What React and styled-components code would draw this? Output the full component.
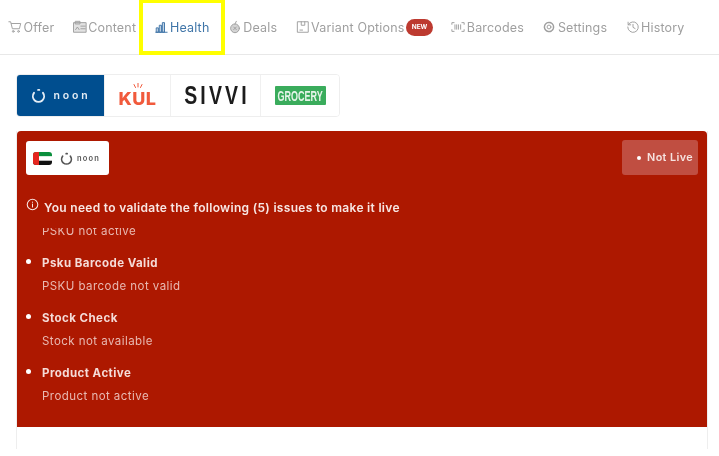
import React from 'react'
import styled, { createGlobalStyle } from 'styled-components'

const Global = createGlobalStyle`
  * { box-sizing: border-box; }
  html, body { margin: 0; padding: 0; background: #fff; }
  body { font-family: "Inter", "Noto Sans", sans-serif; }
`

const Page = styled.div`
  width: 719px;
  height: 456px;
  overflow: hidden;
  background: #fff;
  filter: blur(0.35px);
`

const Nav = styled.nav`
  display: flex;
  align-items: center;
  height: 55px;
  padding-left: 8px;
  gap: 18.3px;
  border-bottom: 1px solid #e8e8e8;
`

const Tab = styled.div`
  position: relative;
  display: flex;
  align-items: center;
  gap: 1.5px;
  height: 100%;
  font-size: 12.5px;
  letter-spacing: 0.18px;
  color: ${p => (p.$active ? '#3f75a8' : '#9f9f9f')};

  &::after {
    content: '';
    display: ${p => (p.$active ? 'block' : 'none')};
    position: absolute;
    left: -15px;
    right: -16px;
    top: 0;
    bottom: -1px;
    border: 4px solid #ffff00;
    border-top-width: 3px;
  }
`

const Badge = styled.span`
  display: flex;
  align-items: center;
  justify-content: center;
  width: 27px;
  height: 17px;
  border-radius: 9px;
  background: #bd3a30;
  color: #fff;
  font-size: 6.5px;
  font-weight: 700;
  letter-spacing: 0;
`

const Main = styled.main`
  padding: 19px 11px 0 16px;
`

const Stores = styled.div`
  display: inline-flex;
  height: 43px;
  border: 1px solid #eeeeee;
  border-radius: 4px;
  overflow: hidden;
`

const Store = styled.div`
  display: flex;
  align-items: center;
  justify-content: center;
  width: ${p => p.$w}px;
  background: ${p => (p.$active ? '#004e8f' : '#fff')};
  border-left: ${p => (p.$active ? 'none' : '1px solid #f0f0f0')};
`

const NoonMark = styled.div`
  display: flex;
  align-items: center;
  gap: ${p => (p.$small ? 4 : 8)}px;
  color: ${p => (p.$small ? '#555' : '#e4edf5')};
  font-size: ${p => (p.$small ? 7.5 : 10.5)}px;
  font-weight: 600;
  letter-spacing: ${p => (p.$small ? 1.2 : 2.8)}px;
`

const Kul = styled.span`
  position: relative;
  color: #f15a3c;
  font-size: 18px;
  font-weight: 800;
  letter-spacing: 0.5px;
  line-height: 1;
  margin-top: 7px;
`

const KulRays = styled.svg`
  position: absolute;
  left: 13px;
  top: -7px;
`

const Sivvi = styled.span`
  display: block;
  color: #1c1c1c;
  font-family: "Liberation Sans", sans-serif;
  font-size: 25px;
  font-weight: 700;
  letter-spacing: 4px;
  margin-right: -2px;
  transform: scaleX(0.78);
`

const Grocery = styled.span`
  display: flex;
  align-items: center;
  justify-content: center;
  width: 51px;
  height: 19px;
  background: #3aac5c;
  border-radius: 1px;
`

const GroceryText = styled.span`
  display: block;
  color: #e4f4e8;
  font-family: "Liberation Sans", sans-serif;
  font-size: 12px;
  font-weight: 700;
  transform: scale(0.75, 1.25);
`

const Card = styled.section`
  margin-top: 14px;
  height: 318px;
  border: 1px solid #eeeeee;
  border-top: none;
  border-bottom: none;
`

const Alert = styled.div`
  height: 296px;
  padding: 10px 9px 0 9px;
  background: #ad1800;
  border-radius: 4px 4px 0 0;
  display: flex;
  flex-direction: column;
  overflow: hidden;
`

const AlertTop = styled.div`
  display: flex;
  justify-content: space-between;
  align-items: flex-start;
`

const MarketChip = styled.div`
  display: flex;
  align-items: center;
  gap: 8px;
  width: 83px;
  height: 34px;
  padding-left: 7px;
  background: #fff;
  border-radius: 3px;
`

const Flag = styled.span`
  display: flex;
  border-radius: 3px;
  overflow: hidden;
  line-height: 0;
`

const Status = styled.div`
  display: flex;
  align-items: center;
  justify-content: flex-end;
  gap: 6px;
  width: 76px;
  height: 35px;
  margin-top: -1px;
  padding-right: 5px;
  background: #c04e41;
  border-radius: 3px;
  color: #f6e3e0;
  font-size: 10.8px;
  font-weight: 600;
  letter-spacing: 0.4px;
`

const Dot = styled.span`
  width: 4px;
  height: 4px;
  border-radius: 50%;
  background: #fff;
`

const Heading = styled.div`
  display: flex;
  align-items: center;
  gap: 5px;
  margin-top: 24px;
  height: 16px;
  color: #f7e6e3;
  font-size: 12px;
  font-weight: 600;
  letter-spacing: 0.3px;
`

const HeadingIcon = styled.svg`
  margin-top: -6px;
`

const Scroll = styled.div`
  flex: 1;
  margin-top: 13px;
  overflow: hidden;
`

const Issues = styled.ul`
  list-style: none;
  margin: -24px 0 0;
  padding: 0;
`

const Issue = styled.li`
  position: relative;
  height: ${p => (p.$scrolled ? 39 : 55)}px;
  padding: 12px 0 0 16px;

  &::before {
    content: '';
    display: ${p => (p.$scrolled ? 'none' : 'block')};
    position: absolute;
    left: 0;
    top: 16px;
    width: 5px;
    height: 5px;
    border-radius: 50%;
    background: #fff;
  }
`

const IssueTitle = styled.div`
  color: #f5dcd8;
  font-size: 11.5px;
  font-weight: 700;
  letter-spacing: 0.45px;
  line-height: 16px;
`

const IssueText = styled.div`
  margin-top: 7px;
  color: #e8b9b1;
  font-size: 11.5px;
  letter-spacing: 0.45px;
  line-height: 16px;
`

const IconSvg = ({ children, size = 14 }) => (
  <svg width={size} height={size} viewBox="0 0 16 16" fill="none" stroke="currentColor" strokeWidth="1.1" strokeLinecap="round" strokeLinejoin="round">
    {children}
  </svg>
)

const icons = {
  offer: <><path d="M1 2h2l2 8h8l1.5-6H4" /><circle cx="6" cy="13" r="1" /><circle cx="12" cy="13" r="1" /></>,
  content: <><rect x="1" y="3" width="14" height="11" fill="currentColor" fillOpacity=".3" /><rect x="3" y="1.5" width="5" height="3" /><path d="M9 7h5M9 10h5M3 11l2-3 2 3" /></>,
  health: <><path d="M2 14h13" /><rect x="3" y="9" width="2" height="5" fill="currentColor" fillOpacity=".3" /><rect x="6.5" y="6" width="2" height="8" fill="currentColor" fillOpacity=".3" /><rect x="10" y="3" width="2" height="11" fill="currentColor" fillOpacity=".3" /></>,
  deals: <><circle cx="8" cy="9.5" r="5" fill="currentColor" fillOpacity=".45" /><path d="M8 4.5L9.5 1.5M6.5 8l3 3M6.5 11l3-3" /></>,
  variant: <><rect x="2" y="2" width="12" height="12" /><path d="M6 2v4h4V2M4.5 11.5h3" /></>,
  barcode: <><path d="M1 5V3h2.5M15 5V3h-2.5M1 11v2h2.5M15 11v2h-2.5M4.5 5.5v5M6.5 5.5v5M8.5 5.5v5M11 5.5v5" /></>,
  settings: <><circle cx="8" cy="8" r="2.2" /><circle cx="8" cy="8" r="5.2" strokeDasharray="1.6 .9" strokeWidth="1.7" /></>,
  history: <><path d="M2.6 5.5A6 6 0 1 1 2 8M2.4 2.5v3h3M8 5v3.4l2.4 1.4" /></>,
}

const tabs = [
  { label: 'Offer', icon: 'offer' },
  { label: 'Content', icon: 'content' },
  { label: 'Health', icon: 'health', active: true },
  { label: 'Deals', icon: 'deals' },
  { label: 'Variant Options', icon: 'variant', badge: 'NEW' },
  { label: 'Barcodes', icon: 'barcode' },
  { label: 'Settings', icon: 'settings' },
  { label: 'History', icon: 'history' },
]

// first one is scrolled half out of the list, its title is not in view
const issues = [
  { text: 'PSKU not active' },
  { title: 'Psku Barcode Valid', text: 'PSKU barcode not valid' },
  { title: 'Stock Check', text: 'Stock not available' },
  { title: 'Product Active', text: 'Product not active' },
]

const NoonIcon = ({ size }) => (
  <svg width={size} height={size} viewBox="0 0 20 20" fill="none" stroke="currentColor" strokeWidth="2.6" strokeLinecap="round">
    <path d="M16 6.5A7.5 7.5 0 1 1 4 6.5" />
    <path d="M9.5 2.5h1.5" />
  </svg>
)

const App = () => (
  <Page>
    <Global />
    <Nav>
      {tabs.map(t => (
        <Tab key={t.label} $active={t.active}>
          <IconSvg>{icons[t.icon]}</IconSvg>
          <span>{t.label}</span>
          {t.badge && <Badge>{t.badge}</Badge>}
        </Tab>
      ))}
    </Nav>
    <Main>
      <Stores>
        <Store $w={87} $active>
          <NoonMark><NoonIcon size={15} /><span>noon</span></NoonMark>
        </Store>
        <Store $w={66}>
          <Kul>
            <KulRays width="14" height="7" viewBox="0 0 14 7" stroke="#f15a3c" strokeWidth="1" strokeLinecap="round">
              <path d="M7 0v4M3 1.5l1.5 3M11 1.5l-1.5 3" />
            </KulRays>
            KUL
          </Kul>
        </Store>
        <Store $w={90}><Sivvi>SIVVI</Sivvi></Store>
        <Store $w={79}><Grocery><GroceryText>GROCERY</GroceryText></Grocery></Store>
      </Stores>
      <Card>
        <Alert>
          <AlertTop>
            <MarketChip>
              <Flag>
                <svg width="19" height="13" viewBox="0 0 19 13">
                  <rect width="19" height="4.4" fill="#0a8f3c" />
                  <rect y="4.4" width="19" height="4.3" fill="#fff" />
                  <rect y="8.7" width="19" height="4.3" fill="#111" />
                  <rect width="6" height="13" fill="#e5261f" />
                </svg>
              </Flag>
              <NoonMark $small><NoonIcon size={13} /><span>noon</span></NoonMark>
            </MarketChip>
            <Status><Dot />Not Live</Status>
          </AlertTop>
          <Heading>
            <HeadingIcon width="13" height="13" viewBox="0 0 16 16" fill="none" stroke="currentColor" strokeWidth="1.3" strokeLinecap="round">
              <circle cx="8" cy="8" r="6.5" />
              <path d="M8 7.5V11M8 5v.2" />
            </HeadingIcon>
            You need to validate the following (5) issues to make it live
          </Heading>
          <Scroll>
            <Issues>
              {issues.map(({ title, text }) => (
                <Issue key={text} $scrolled={!title}>
                  {title && <IssueTitle>{title}</IssueTitle>}
                  <IssueText>{text}</IssueText>
                </Issue>
              ))}
            </Issues>
          </Scroll>
        </Alert>
      </Card>
    </Main>
  </Page>
)

export default App
